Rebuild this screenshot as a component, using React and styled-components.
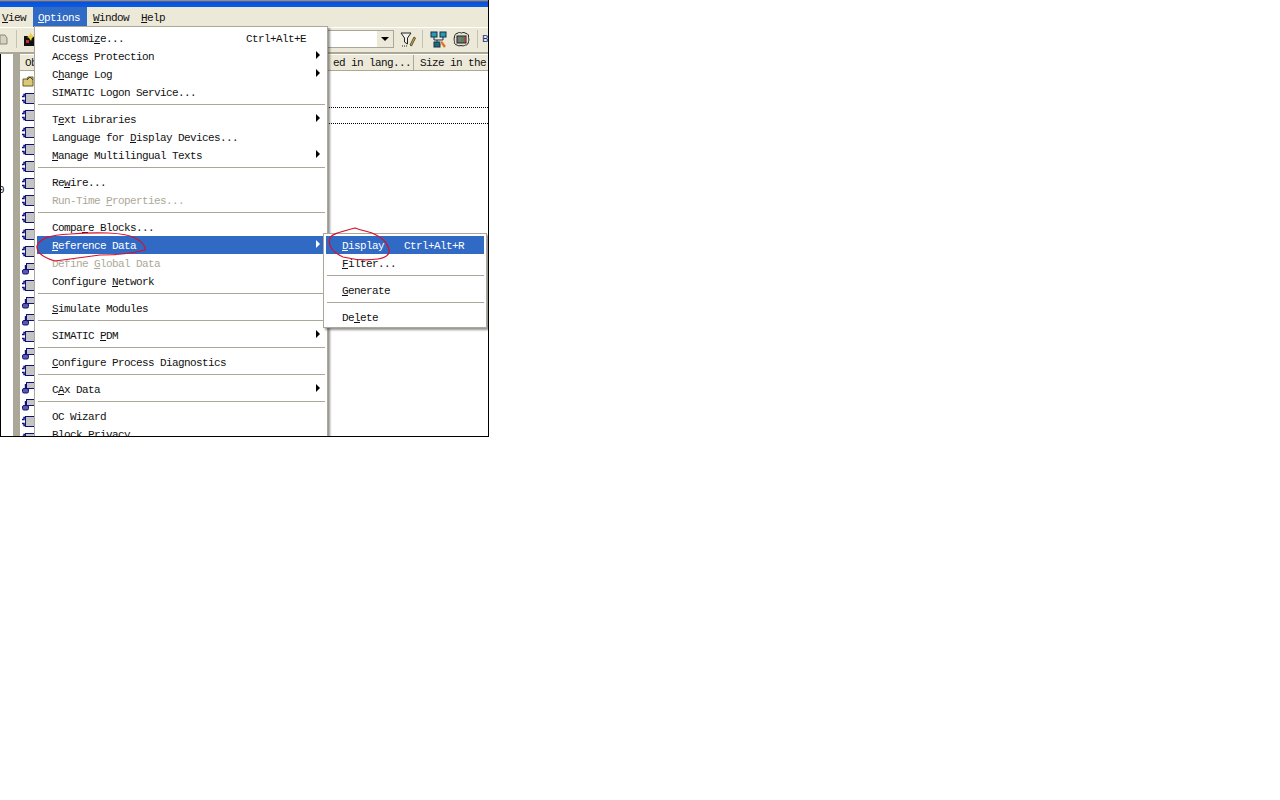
import React from 'react';
import styled, { createGlobalStyle } from 'styled-components';

const GlobalStyle = createGlobalStyle`
  html, body {
    margin: 0;
    padding: 0;
    background: #fff;
  }
  body {
    font-family: "Liberation Mono", "Noto Sans CJK SC", monospace;
    font-size: 11px;
    letter-spacing: -0.6px;
    color: #111;
  }
`;

const mainMenu = [
  { label: 'Customize...', key: 7, shortcut: 'Ctrl+Alt+E' },
  { label: 'Access Protection', key: 4, arrow: true },
  { label: 'Change Log', key: 1, arrow: true },
  { label: 'SIMATIC Logon Service...' },
  { sep: true },
  { label: 'Text Libraries', key: 1, arrow: true },
  { label: 'Language for Display Devices...', key: 13 },
  { label: 'Manage Multilingual Texts', key: 0, arrow: true },
  { sep: true },
  { label: 'Rewire...', key: 2 },
  { label: 'Run-Time Properties...', key: 9, disabled: true },
  { sep: true },
  { label: 'Compare Blocks...', key: 5 },
  { label: 'Reference Data', key: 0, active: true, arrow: true },
  { label: 'Define Global Data', key: 7, disabled: true },
  { label: 'Configure Network', key: 10 },
  { sep: true },
  { label: 'Simulate Modules', key: 0 },
  { sep: true },
  { label: 'SIMATIC PDM', key: 8, arrow: true },
  { sep: true },
  { label: 'Configure Process Diagnostics', key: 0 },
  { sep: true },
  { label: 'CAx Data', key: 1, arrow: true },
  { sep: true },
  { label: 'OC Wizard' },
  { label: 'Block Privacy' },
];

const subMenu = [
  { label: 'Display', key: 0, active: true, shortcut: 'Ctrl+Alt+R' },
  { label: 'Filter...', key: 0 },
  { sep: true },
  { label: 'Generate', key: 0 },
  { sep: true },
  { label: 'Delete', key: 2 },
];

const blockKinds = ['folder', 'b', 'b', 'b', 'b', 'b', 'b', 'b', 'b', 'b', 'b', 'f', 'b', 'f', 'f', 'b', 'f', 'b', 'f', 'f', 'b', 'b'];

const Accel = ({ text, index }) => {
  if (index === undefined) return text;
  return (
    <>
      {text.slice(0, index)}
      <u>{text[index]}</u>
      {text.slice(index + 1)}
    </>
  );
};

const Arrow = styled.i`
  position: absolute;
  right: 5px;
  top: 4px;
  border-left: 4px solid ${(p) => (p.$light ? '#fff' : '#000')};
  border-top: 4px solid transparent;
  border-bottom: 4px solid transparent;
`;

const MenuRows = ({ items, wide }) =>
  items.map((item, i) =>
    item.sep ? (
      <Separator key={i} />
    ) : (
      <MenuRow key={i} $active={item.active} $disabled={item.disabled} $wide={wide}>
        <span>
          <Accel text={item.label} index={item.key} />
        </span>
        {item.shortcut && <Shortcut $wide={wide}>{item.shortcut}</Shortcut>}
        {item.arrow && <Arrow $light={item.active} />}
      </MenuRow>
    )
  );

const BlockIcon = ({ kind }) => {
  if (kind === 'folder') {
    return (
      <svg width="13" height="13" viewBox="0 0 13 13">
        <path d="M1 4h4l1-2h5v9H1z" fill="#d8c878" stroke="#6b5a20" />
        <path d="M5 5l3-3 3 3" fill="none" stroke="#444" />
      </svg>
    );
  }
  if (kind === 'f') {
    return (
      <svg width="13" height="13" viewBox="0 0 13 13">
        <rect x="4.500" y="1.500" width="8" height="6" fill="#c4c4c4" stroke="#10107a" />
        <path d="M3.500 3v5" stroke="#10107a" strokeWidth="1.400" fill="none" />
        <rect x="0.500" y="7.500" width="6" height="4.500" rx="1.500" fill="#5a5aa8" stroke="#10107a" />
      </svg>
    );
  }
  return (
    <svg width="13" height="13" viewBox="0 0 13 13">
      <path d="M3.500 2.500H2v2H0M3.500 10.500H2v-2H0" fill="none" stroke="#10107a" strokeWidth="1.400" />
      <rect x="3.500" y="1.500" width="9" height="10" fill="#c4c4c4" stroke="#10107a" />
    </svg>
  );
};

export default function App() {
  return (
    <>
      <GlobalStyle />
      <Shot>
        <TitleBar />
        <MenuBar>
          <MenuTitle $left={2} $right={6} $after={1}>
            <u>V</u>iew
          </MenuTitle>
          <MenuTitle $open $left={5} $right={7}>
            <u>O</u>ptions
          </MenuTitle>
          <MenuTitle $left={6} $right={6} $after={4}>
            <u>W</u>indow
          </MenuTitle>
          <MenuTitle $left={2} $right={6}>
            <u>H</u>elp
          </MenuTitle>
        </MenuBar>
        <Toolbar>
          <ToolLeft>
            <svg width="9" height="14" viewBox="0 0 9 14">
              <path d="M0 3h5l2 3v6H0z" fill="#d6d3c4" stroke="#8a8778" />
            </svg>
            <ToolDivider />
            <svg width="14" height="15" viewBox="0 0 14 15">
              <rect x="0" y="4" width="13" height="10" fill="#111" />
              <path d="M6 0l2 3 3 1-3 2-1 3-2-3-2-1 3-2z" fill="#e8d040" />
              <rect x="2" y="8" width="3" height="3" fill="#c03030" />
            </svg>
          </ToolLeft>
          <Combo>
            <ComboButton />
          </Combo>
          <ToolIcon $pull={2}>
            <svg width="17" height="17" viewBox="0 0 17 17">
              <path d="M1 2h10L7.500 7v6l-3-2V7z" fill="#f4f2e8" stroke="#222" />
              <path d="M2 15h6" stroke="#222" strokeDasharray="1 1" />
              <path d="M10 14l4-8 1.500 1-4 8z" fill="#d8b020" stroke="#333" strokeWidth=".8" />
            </svg>
          </ToolIcon>
          <ToolDivider />
          <ToolIcon>
            <svg width="17" height="17" viewBox="0 0 17 17">
              <rect x="1" y="1" width="6" height="5" fill="#2a9ab0" stroke="#12304a" />
              <rect x="10" y="1" width="6" height="5" fill="#2a9ab0" stroke="#12304a" />
              <rect x="4" y="11" width="6" height="5" fill="#1f6a78" stroke="#12304a" />
              <path d="M4 6v3h9V6M7 9v2" stroke="#12304a" fill="none" />
              <path d="M10 11l2-1 4 5-2 2z" fill="#e06a20" stroke="#f0d0a0" strokeWidth=".5" />
            </svg>
          </ToolIcon>
          <ToolIcon>
            <svg width="17" height="17" viewBox="0 0 17 17">
              <path
                d="M4 2.500c2-1.500 3-1 4.500-.5 2-1 3-.5 4.500.5 2 0 3 2 2.500 4 .5 2 .5 3 0 4 0 2-1.500 4-3 3.500-1.500 1-3 1-4.500.5-1.500.5-3 .5-4-.5-2 0-3-2-2.500-3.500-.5-1.500-.5-3 0-4.500C1.500 4 2.500 2.500 4 2.500z"
                fill="#e6e3d6"
                stroke="#222"
              />
              <rect x="4" y="5" width="9" height="7" fill="#777" stroke="#222" />
              <rect x="8" y="6" width="2" height="5" fill="#2a9a50" />
              <rect x="10.500" y="6" width="2" height="5" fill="#c04040" />
            </svg>
          </ToolIcon>
          <ToolDivider />
          <EdgeGlyph>B</EdgeGlyph>
        </Toolbar>
        <Body>
          <SidePane>
            <SideMark>0</SideMark>
          </SidePane>
          <Splitter />
          <ListPane>
            <HeaderRow>
              <HeaderCell $w={308}>Ob</HeaderCell>
              <HeaderCell $w={86} $right>
                ed in lang...
              </HeaderCell>
              <HeaderCell $last>Size in the</HeaderCell>
            </HeaderRow>
            <Rows>
              {blockKinds.map((kind, i) => (
                <BlockRow key={i}>
                  <BlockIcon kind={kind} />
                  <RowCell $dotted={i === 2} />
                </BlockRow>
              ))}
            </Rows>
          </ListPane>
        </Body>

        <MainMenu>
          <MenuRows items={mainMenu} />
        </MainMenu>
        <SubMenu>
          <MenuRows items={subMenu} wide />
        </SubMenu>

        <Scribble width="489" height="437" viewBox="0 0 489 437">
          <path
            d="M37 246C40 238 50 235 70 234C95 232 125 232 135 238C142 241 146 247 145 250C130 254 110 255 100 255C85 257 70 259 55 261C45 258 36 254 37 246Z"
            fill="none"
            stroke="#d8102a"
            strokeWidth="1.200"
          />
          <path
            d="M355 228C345 231 332 233 330 238C328 244 330 251 343 257C355 260 370 260 378 259C386 258 390 254 389 250C388 244 384 238 372 233C366 231 360 230 355 228Z"
            fill="none"
            stroke="#d8102a"
            strokeWidth="1.200"
          />
        </Scribble>
      </Shot>
    </>
  );
}

const Shot = styled.div`
  position: relative;
  width: 489px;
  height: 437px;
  box-sizing: border-box;
  border-right: 1px solid #000;
  border-bottom: 1px solid #000;
  overflow: hidden;
  background: #ece9d8;
  display: flex;
  flex-direction: column;
`;

const TitleBar = styled.div`
  height: 7px;
  flex: none;
  background: linear-gradient(#c8a060 0, #0a50d8 2px, #0a5ae0 6px);
`;

const MenuBar = styled.div`
  height: 20px;
  flex: none;
  display: flex;
  background: #ece9d8;
`;

const MenuTitle = styled.div`
  display: flex;
  align-items: center;
  padding: 2px ${(p) => p.$right}px 0 ${(p) => p.$left}px;
  margin-right: ${(p) => p.$after || 0}px;
  background: ${(p) => (p.$open ? '#316ac5' : 'transparent')};
  color: ${(p) => (p.$open ? '#fff' : '#111')};
`;

const Toolbar = styled.div`
  height: 27px;
  flex: none;
  display: flex;
  align-items: center;
  gap: 6px;
  padding-bottom: 2px;
  box-sizing: border-box;
  border-top: 1px solid #fff;
  border-bottom: 2px solid #aca899;
`;

const ToolLeft = styled.div`
  display: flex;
  align-items: center;
  gap: 6px;
  width: 333px;
`;

const ToolDivider = styled.span`
  width: 1px;
  height: 18px;
  background: #c5c2b2;
  margin: 0 1px;
`;

const Combo = styled.div`
  width: 75px;
  height: 18px;
  margin-left: -2px;
  background: #fff;
  box-sizing: border-box;
  border: 1px solid #a9a79a;
  display: flex;
  justify-content: flex-end;
`;

const ComboButton = styled.span`
  width: 16px;
  background: #ece9d8;
  position: relative;
  &::after {
    content: '';
    position: absolute;
    left: 4px;
    top: 6px;
    border-top: 4px solid #000;
    border-left: 4px solid transparent;
    border-right: 4px solid transparent;
  }
`;

const ToolIcon = styled.span`
  display: flex;
  width: 17px;
  height: 17px;
  margin-right: ${(p) => (p.$pull ? -p.$pull : 0)}px;
`;

const EdgeGlyph = styled.span`
  color: #1c3a90;
  margin-left: -3px;
`;

const Body = styled.div`
  flex: 1;
  min-height: 0;
  display: flex;
  background: #fff;
`;

const SidePane = styled.div`
  width: 13px;
  flex: none;
  background: #fff;
  box-sizing: border-box;
  border-left: 1px solid #000;
  padding-top: 130px;
`;

const SideMark = styled.span`
  display: block;
  margin-left: -3px;
`;

const Splitter = styled.div`
  width: 7px;
  flex: none;
  background: #aca899;
`;

const ListPane = styled.div`
  flex: 1;
  min-width: 0;
  display: flex;
  flex-direction: column;
  overflow: hidden;
`;

const HeaderRow = styled.div`
  height: 17px;
  flex: none;
  display: flex;
  background: #ece9d8;
  box-sizing: border-box;
  border-top: 1px solid #fff;
  border-bottom: 1px solid #aca899;
`;

const HeaderCell = styled.div`
  width: ${(p) => (p.$w ? `${p.$w}px` : 'auto')};
  flex: ${(p) => (p.$last ? 1 : 'none')};
  box-sizing: border-box;
  padding: 0 ${(p) => (p.$right ? 7 : 5)}px 0 ${(p) => (p.$last ? 6 : 5)}px;
  white-space: nowrap;
  line-height: 16px;
  overflow: hidden;
  text-align: ${(p) => (p.$right ? 'right' : 'left')};
  border-right: ${(p) => (p.$last ? 'none' : '1px solid #aca899')};
`;

const Rows = styled.div`
  flex: 1;
  padding-top: 2px;
`;

const BlockRow = styled.div`
  height: 17px;
  padding-left: 2px;
  display: flex;
  align-items: center;
`;

const RowCell = styled.div`
  flex: 1;
  align-self: stretch;
  box-sizing: border-box;
  border-top: ${(p) => (p.$dotted ? '1px dotted #000' : 'none')};
  border-bottom: ${(p) => (p.$dotted ? '1px dotted #000' : 'none')};
`;

const MenuPanel = styled.div`
  position: absolute;
  box-sizing: border-box;
  background: #fff;
  border: 1px solid #aca899;
  box-shadow: 2px 2px 2px rgba(60, 60, 60, 0.55);
  padding: 2px;
`;

const MainMenu = styled(MenuPanel)`
  left: 34px;
  top: 26px;
  width: 294px;
  height: 430px;
`;

const SubMenu = styled(MenuPanel)`
  left: 323px;
  top: 233px;
  width: 164px;
  height: 95px;
`;

const MenuRow = styled.div`
  position: relative;
  height: 18px;
  line-height: 20px;
  padding-left: ${(p) => (p.$wide ? 16 : 15)}px;
  white-space: nowrap;
  background: ${(p) => (p.$active ? '#316ac5' : 'transparent')};
  color: ${(p) => (p.$active ? '#fff' : p.$disabled ? '#aca899' : '#111')};
`;

const Shortcut = styled.span`
  position: absolute;
  left: ${(p) => (p.$wide ? 78 : 209)}px;
  top: 0;
`;

const Separator = styled.div`
  height: 1px;
  margin: 3px 0 5px 1px;
  background: #aca899;
`;

const Scribble = styled.svg`
  position: absolute;
  left: 0;
  top: 0;
  pointer-events: none;
`;
